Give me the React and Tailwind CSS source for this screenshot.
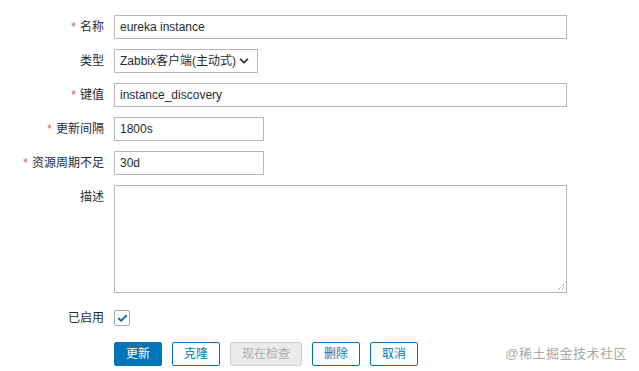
import { ChevronDown, Check } from 'lucide-react';

const font = { fontFamily: '"Liberation Sans", Arial, "Noto Sans CJK SC", sans-serif' };

const Row = ({ label, required, children, className = 'items-center' }) => (
    <div className={`flex ${className}`}>
        <div className="w-[104px] shrink-0 text-right text-[12px] text-[#1f2c33] leading-[24px]">
            {required && <span className="text-[#e45959] mr-[4px]">*</span>}
            {label}
        </div>
        <div className="ml-[10px]">{children}</div>
    </div>
);

const inputCls = 'h-[24px] border border-[#b8b8b8] bg-white px-[5px] text-[12px] text-[#1f2c33] leading-[22px] flex items-center';

const App = () => {
    return (
        <div className="relative w-[639px] h-[371px] bg-white overflow-hidden" style={font}>
            <div className="flex flex-col gap-[10px] pt-[15px]">
                <Row label="名称" required>
                    <div className={`${inputCls} w-[453px] border-[#0e6a9c]`}>eureka instance</div>
                </Row>
                <Row label="类型">
                    <div className={`${inputCls} w-[144px] justify-between pr-[6px]`}>
                        <span>Zabbix客户端(主动式)</span>
                        <ChevronDown className="w-[14px] h-[14px] text-[#1f2c33]" strokeWidth={3} />
                    </div>
                </Row>
                <Row label="键值" required>
                    <div className={`${inputCls} w-[453px]`}>instance_discovery</div>
                </Row>
                <Row label="更新间隔" required>
                    <div className={`${inputCls} w-[150px]`}>1800s</div>
                </Row>
                <Row label="资源周期不足" required>
                    <div className={`${inputCls} w-[150px]`}>30d</div>
                </Row>
                <Row label="描述" className="items-start">
                    <div className="relative w-[453px] h-[108px] border border-[#b8b8b8] bg-white">
                        <svg className="absolute right-[1px] bottom-[1px]" width="8" height="8" viewBox="0 0 8 8">
                            <path d="M7 1L1 7M7 4L4 7" stroke="#777" strokeWidth="1" strokeDasharray="1 1" />
                        </svg>
                    </div>
                </Row>
            </div>
            <div className="flex items-center mt-[13px]">
                <div className="w-[104px] text-right text-[12px] text-[#1f2c33] leading-[24px]">已启用</div>
                <div className="ml-[10px] w-[16px] h-[16px] border border-[#a8a8a8] rounded-[2px] bg-white flex items-center justify-center">
                    <Check className="w-[11px] h-[11px] text-[#0e6a9c]" strokeWidth={4} />
                </div>
            </div>
            <div className="flex items-center gap-[10px] ml-[114px] mt-[12px]">
                <button className="h-[24px] w-[48px] rounded-[2px] bg-[#0275b8] border border-[#0275b8] text-white text-[12px]">更新</button>
                <button className="h-[24px] w-[48px] rounded-[2px] bg-white border border-[#0275b8] text-[#0275b8] text-[12px]">克隆</button>
                <button className="h-[24px] w-[72px] rounded-[2px] bg-[#ebebeb] border border-[#d0d0d0] text-[#acacac] text-[12px]">现在检查</button>
                <button className="h-[24px] w-[48px] rounded-[2px] bg-white border border-[#0275b8] text-[#0275b8] text-[12px]">删除</button>
                <button className="h-[24px] w-[48px] rounded-[2px] bg-white border border-[#0275b8] text-[#0275b8] text-[12px]">取消</button>
                <div className="ml-auto mr-[12px] text-[13px] text-[#a9a9a9] tracking-[0.5px]">@稀土掘金技术社区</div>
            </div>
        </div>
    );
};

export default App;
